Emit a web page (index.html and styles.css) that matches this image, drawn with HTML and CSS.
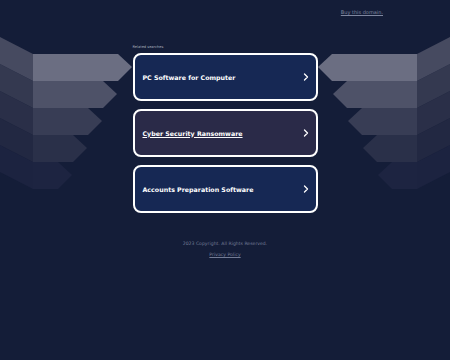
FILE: index.html
```html
<!DOCTYPE html>
<html lang="en">
  <head>
    <meta charset="UTF-8" />
    <meta name="viewport" content="width=device-width, initial-scale=1.0" />
    <title>Related searches</title>
    <link rel="stylesheet" href="styles.css">
  </head>
  <body>
    <div class="page">
      <!-- decorative ribbons behind the content -->
      <svg class="deco" width="450" height="360" viewBox="0 0 450 360">
        <g id="ribbons">
          <polygon points="0,145 33,162 33,189 0,172" fill="#1c2340" />
          <polygon points="33,162 58,162 72,175 58,189 33,189" fill="#1d2441" />
          <polygon points="0,118 33,135 33,162 0,145" fill="#222842" />
          <polygon points="33,135 73,135 87,148 73,162 33,162" fill="#2a3049" />
          <polygon points="0,91 33,108 33,135 0,118" fill="#2a2f48" />
          <polygon points="33,108 88,108 102,121 88,135 33,135" fill="#383d55" />
          <polygon points="0,64 33,81 33,108 0,91" fill="#343950" />
          <polygon points="33,81 103,81 117,94 103,108 33,108" fill="#4e5268" />
          <polygon points="0,37 33,54 33,81 0,64" fill="#464a60" />
          <polygon points="33,54 118,54 132,67 118,81 33,81" fill="#6b6e82" />
        </g>
        <use href="#ribbons" transform="translate(450,0) scale(-1,1)" />
      </svg>

      <div class="topbar">
        <a href="#" class="buy-link">Buy this domain.</a>
      </div>

      <div class="searches">
        <div class="searches-title">Related searches</div>
        <a href="#" class="search-card">
          <span>PC Software for Computer</span>
          <svg class="chevron" width="6" height="8" viewBox="0 0 6 8"><polyline points="1.5,1 4.5,4 1.5,7" /></svg>
        </a>
        <a href="#" class="search-card search-card-active">
          <span>Cyber Security Ransomware</span>
          <svg class="chevron" width="6" height="8" viewBox="0 0 6 8"><polyline points="1.5,1 4.5,4 1.5,7" /></svg>
        </a>
        <a href="#" class="search-card">
          <span>Accounts Preparation Software</span>
          <svg class="chevron" width="6" height="8" viewBox="0 0 6 8"><polyline points="1.5,1 4.5,4 1.5,7" /></svg>
        </a>
      </div>

      <div class="footer">
        <div>2023 Copyright. All Rights Reserved.</div>
        <a href="#" class="privacy">Privacy Policy</a>
      </div>
    </div>
  </body>
</html>
```

FILE: styles.css
```css
body {
  margin: 0;
  background-color: #141d38;
  font-family: "DejaVu Sans", Verdana, sans-serif;
  color: #ffffff;
}
.page {
  position: relative;
  width: 450px;
  height: 360px;
  overflow: hidden;
}
.deco {
  position: absolute;
  top: 0;
  left: 0;
  z-index: 0;
}
.topbar {
  position: relative;
  display: flex;
  justify-content: flex-end;
  height: 44px;
  padding-right: 67px;
  box-sizing: border-box;
  padding-top: 9px;
}
.buy-link {
  font-size: 5px;
  line-height: 6px;
  color: #7f87a0;
  text-decoration: underline;
}
.searches {
  position: relative;
  width: 185px;
  margin: 0 auto;
  display: flex;
  flex-direction: column;
  gap: 8px;
}
.searches-title {
  font-size: 3.6px;
  line-height: 6px;
  color: #a8adbd;
  margin-bottom: -5px;
}
.search-card {
  display: flex;
  align-items: center;
  justify-content: space-between;
  height: 48px;
  box-sizing: border-box;
  padding: 0 7px 0 8px;
  border: 2px solid #ffffff;
  border-radius: 8px;
  background-color: #162854;
  color: #ffffff;
  font-size: 6.3px;
  font-weight: bold;
  text-decoration: none;
}
.search-card-active {
  background-color: #2a2a48;
  text-decoration: underline;
}
.chevron polyline {
  fill: none;
  stroke: #ffffff;
  stroke-width: 1.3;
  stroke-linecap: round;
  stroke-linejoin: round;
}
.footer {
  position: relative;
  display: flex;
  flex-direction: column;
  align-items: center;
  gap: 3px;
  margin-top: 27px;
  font-size: 4.6px;
  line-height: 8px;
  color: #737c96;
}
.privacy {
  color: #737c96;
  text-decoration: underline;
}
```
